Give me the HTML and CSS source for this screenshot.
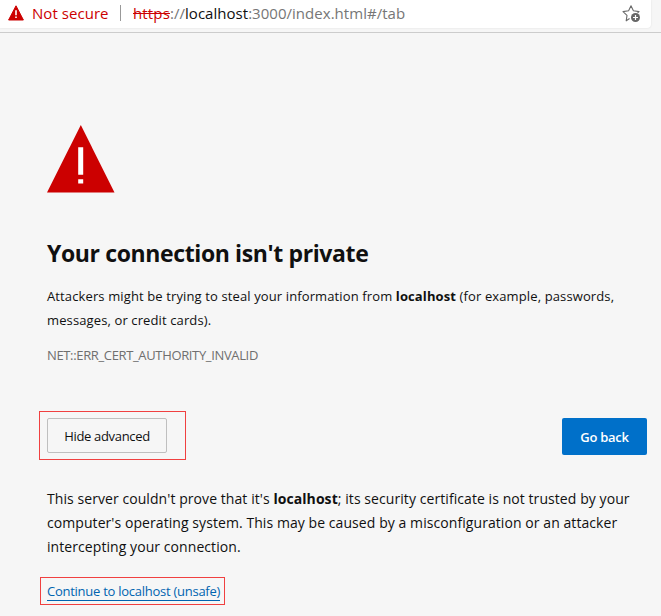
FILE: index.html
```html
<!DOCTYPE html>
<html lang="en">
<head>
<meta charset="utf-8">
<title>Privacy error</title>
<link rel="stylesheet" href="styles.css">
</head>
<body>
<header class="toolbar">
  <div class="address">
    <svg class="warn" width="16" height="16" viewBox="0 0 16 16"><path d="M8 .8 15.4 15H.6Z" fill="#c00" stroke="#c00" stroke-width="1" stroke-linejoin="round"/><path d="M7.2 5.3h1.6v5H7.2zM7.2 11.5h1.6v1.6H7.2z" fill="#fff"/></svg>
    <span class="status">Not secure</span>
    <span class="divider"></span>
    <span class="url"><s class="scheme">https</s>://<span class="host">localhost</span>:3000/index.html#/tab</span>
    <svg class="star" width="20" height="20" viewBox="0 0 20 20"><path d="M8.6 15.5 5.2 17.8l.8-5.4L2 8.6l5.6-.8L10 2.8l2.4 5 5.6.8-1.5 1.5" fill="none" stroke="#6b6b6b" stroke-width="1.1" stroke-linejoin="round"/><circle cx="14.5" cy="14.5" r="4.5" fill="#666"/><path d="M14.5 12v5M12 14.5h5" stroke="#fff" stroke-width="1.2"/></svg>
  </div>
</header>
<main class="page">
  <svg class="alert" width="68" height="68" viewBox="0 0 68 68"><path d="M33.8 0 67.5 67.6H0Z" fill="#c00"/><path d="M31.2 22.2h5v27.6h-5zM31.2 54.2h5v4.2h-5z" fill="#fff"/></svg>
  <h1>Your connection isn't private</h1>
  <p class="summary">Attackers might be trying to steal your information from <b>localhost</b> (for example, passwords,<br>messages, or credit cards).</p>
  <p class="code">NET::ERR_CERT_AUTHORITY_INVALID</p>
  <div class="actions">
    <div class="mark"><button class="secondary">Hide advanced</button></div>
    <button class="primary">Go back</button>
  </div>
  <p class="details">This server couldn't prove that it's <b>localhost</b>; its security certificate is not trusted by your<br>computer's operating system. This may be caused by a misconfiguration or an attacker<br>intercepting your connection.</p>
  <div class="mark-link"><a href="#">Continue to localhost (unsafe)</a></div>
</main>
</body>
</html>
```
FILE: styles.css
```css
* { box-sizing: border-box; }
body {
  margin: 0;
  height: 616px;
  overflow: hidden;
  background: #f6f6f6;
  color: #101010;
  font: 13px/24px "Segoe UI", "Open Sans", "Noto Sans", sans-serif;
}
h1, p { margin: 0; white-space: nowrap; }
button { font: inherit; padding: 0; white-space: nowrap; }
.toolbar { height: 33px; background: #f6f6f6; border-bottom: 1px solid #ccc; }
.address {
  display: flex;
  align-items: center;
  width: 651px;
  height: 28px;
  padding: 0 10px 2px 8px;
  background: #fff;
  border-radius: 0 0 4px 0;
  box-shadow: 0 0 2px #ddd;
  font-size: 15px;
  white-space: nowrap;
}
.warn { flex: none; margin-top: -1px; }
.status { width: 88px; margin-left: 8px; color: #c00; letter-spacing: .05px; }
.divider { width: 1px; height: 16px; background: #999; }
.url { margin-left: 12px; color: #767676; letter-spacing: .03px; }
.scheme { color: #c00; letter-spacing: .15px; }
.host { color: #101010; }
.star { margin: 0 0 0 auto; }
.page { padding: 92px 14px 0 47px; }
.alert { display: block; }
h1 { margin-top: 44px; font-size: 23px; line-height: 32px; font-weight: 700; letter-spacing: -.38px; }
.summary { margin-top: 15px; letter-spacing: .12px; }
.code { margin-top: 11px; color: #6f6f6f; letter-spacing: -.35px; }
.actions { display: flex; justify-content: space-between; margin: 44px 0 0 -8px; }
.mark { width: 147px; height: 49px; padding: 6px 7px; border: 1px solid #f04040; }
.secondary { display: block; width: 120px; height: 35px; border: 1px solid #bfbfbf; border-radius: 2px; background: transparent; color: #101010; letter-spacing: -.33px; }
.primary { width: 85px; height: 37px; margin-top: 7px; border: 0; border-radius: 2px; background: #0070c9; color: #fff; font-weight: 600; letter-spacing: -.25px; }
.details { margin-top: 27px; font-size: 14px; letter-spacing: .07px; }
.mark-link { width: 185px; height: 28px; margin: 18px 0 0 -7px; padding: 4px 6px; border: 1px solid #f04040; line-height: 18px; white-space: nowrap; }
.mark-link a { display: inline-block; color: #0064b0; text-decoration: none; border-bottom: 1px solid #0064b0; letter-spacing: -.26px; }
```
